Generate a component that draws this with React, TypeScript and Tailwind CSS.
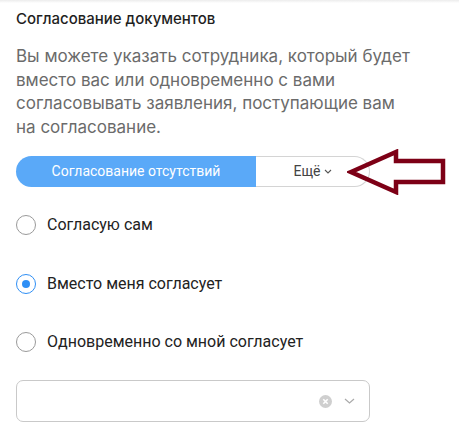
import React from 'react';

const Radio = ({ checked, label }: { checked?: boolean; label: string }) => (
  <label className="flex items-center gap-[11px] h-[20px]">
    <span
      className={
        checked
          ? 'flex h-[20px] w-[20px] items-center justify-center rounded-full border-[1.5px] border-[#2f8ff5]'
          : 'flex h-[20px] w-[20px] items-center justify-center rounded-full border-[1.5px] border-[#9a9a9a]'
      }
    >
      {checked && <span className="h-[8px] w-[8px] rounded-full bg-[#2f8ff5]" />}
    </span>
    <span className="text-[16px] text-[#222] font-['Roboto',sans-serif]">{label}</span>
  </label>
);

export default function App() {
  return (
    <div className="relative w-[459px] h-[440px] bg-white overflow-hidden">
      <div className="h-[3px] bg-gradient-to-b from-[#ececec] to-white" />
      <div className="px-4 pt-[5px]">
        <h1 className="text-[15px] font-medium leading-[22px] text-[#1f1f1f] font-['Inter',sans-serif]">
          Согласование документов
        </h1>
        <p className="mt-[15px] w-[400px] text-[17px] leading-[23.5px] text-[#6b6b6b] font-['Inter',sans-serif]">
          Вы можете указать сотрудника, который будет вместо вас или одновременно с вами согласовывать заявления,
          поступающие вам на согласование.
        </p>

        <div className="mt-[17px] flex h-[31px] w-[354px] font-['Roboto',sans-serif] text-[14px]">
          <div className="flex w-[240px] items-center justify-center rounded-l-full bg-[#5aa9f8] text-white">
            Согласование отсутствий
          </div>
          <div className="flex flex-1 items-center justify-center gap-[3px] rounded-r-full border border-l-0 border-[#d4d4d4] text-[#444]">
            Ещё
            <svg width="8" height="5" viewBox="0 0 8 5" fill="none">
              <path d="M1 1l3 3 3-3" stroke="#555" strokeWidth="1.1" />
            </svg>
          </div>
        </div>

        <div className="mt-[28px] flex flex-col gap-[38.5px]">
          <Radio label="Согласую сам" />
          <Radio checked label="Вместо меня согласует" />
          <Radio label="Одновременно со мной согласует" />
        </div>

        <div className="mt-[28px] flex h-[42px] w-[354px] items-center justify-end gap-[12px] rounded-[7px] border border-[#c9c9c9] pr-[14px]">
          <svg width="13" height="13" viewBox="0 0 13 13">
            <circle cx="6.5" cy="6.5" r="6.5" fill="#cfcfcf" />
            <path d="M4.3 4.3l4.4 4.4M8.7 4.3l-4.4 4.4" stroke="#fff" strokeWidth="1.6" />
          </svg>
          <svg width="11" height="6" viewBox="0 0 11 6" fill="none">
            <path d="M1 1l4.5 4 4.5-4" stroke="#aaa" strokeWidth="1.2" />
          </svg>
        </div>
      </div>

      {/* red arrow pointing at Ещё */}
      <svg className="absolute left-[347px] top-[149px]" width="100" height="46" viewBox="0 0 100 46" fill="none">
        <path
          d="M4 23 L49 3 L49 12 L96 12 L96 33 L49 33 L49 43 Z"
          stroke="#7d0016"
          strokeWidth="4.5"
          strokeLinejoin="miter"
        />
      </svg>
    </div>
  );
}
